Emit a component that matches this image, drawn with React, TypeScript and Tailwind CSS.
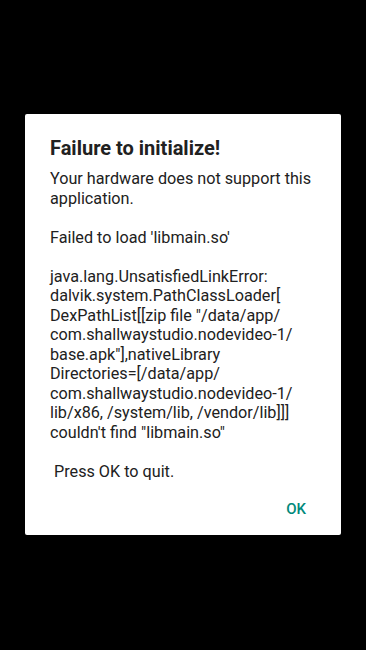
export default function App() {
  return (
    <div
      className="w-[366px] h-[650px] bg-black flex flex-col"
      style={{ fontFamily: "Roboto, 'Noto Sans', sans-serif" }}
    >
      <div className="mt-[114px] mx-[25px] w-[316px] h-[421px] bg-white rounded-[2px] flex flex-col shadow-lg">
        <div className="px-[25px] pt-[22px]">
          <h1 className="text-[20px] leading-[24px] font-bold text-[#212121]">
            Failure to initialize!
          </h1>
          <div className="mt-[9px] text-[16.2px] leading-[19.5px] text-[#212121] whitespace-pre-wrap">
            {`Your hardware does not support this
application.

Failed to load 'libmain.so'

java.lang.UnsatisfiedLinkError:
dalvik.system.PathClassLoader[
DexPathList[[zip file "/data/app/
com.shallwaystudio.nodevideo-1/
base.apk"],nativeLibrary
Directories=[/data/app/
com.shallwaystudio.nodevideo-1/
lib/x86, /system/lib, /vendor/lib]]]
couldn't find "libmain.so"

 Press OK to quit.`}
          </div>
        </div>
        <div className="flex justify-end mt-auto mb-[15px] pr-[35px]">
          <button className="text-[15px] font-medium text-[#00897b]">OK</button>
        </div>
      </div>
    </div>
  )
}
